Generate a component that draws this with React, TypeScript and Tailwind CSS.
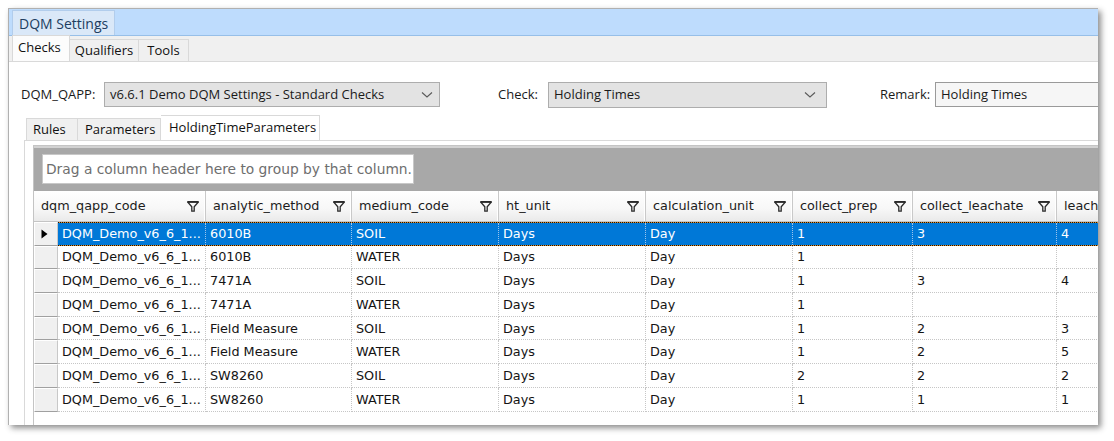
import React from 'react';

const ui = "font-['Open_Sans',sans-serif] text-[13px]";
const grid = "font-['DejaVu_Sans',sans-serif] text-[12.8px]";

const columns = [
  { name: 'analytic_method', w: 'w-[146px]' },
  { name: 'medium_code', w: 'w-[147px]' },
  { name: 'ht_unit', w: 'w-[147px]' },
  { name: 'calculation_unit', w: 'w-[147px]' },
  { name: 'collect_prep', w: 'w-[120px]' },
  { name: 'collect_leachate', w: 'w-[144px]' },
  { name: 'leachate_prep', w: 'w-[140px]' },
];

const rows: string[][] = [
  ['6010B', 'SOIL', 'Days', 'Day', '1', '3', '4'],
  ['6010B', 'WATER', 'Days', 'Day', '1', '', ''],
  ['7471A', 'SOIL', 'Days', 'Day', '1', '3', '4'],
  ['7471A', 'WATER', 'Days', 'Day', '1', '', ''],
  ['Field Measure', 'SOIL', 'Days', 'Day', '1', '2', '3'],
  ['Field Measure', 'WATER', 'Days', 'Day', '1', '2', '5'],
  ['SW8260', 'SOIL', 'Days', 'Day', '2', '2', '2'],
  ['SW8260', 'WATER', 'Days', 'Day', '1', '1', '1'],
];

function Funnel() {
  return (
    <svg width="12" height="11" viewBox="0 0 12 11" className="shrink-0">
      <path d="M0.8 1.2 H11.2 L7.2 5.8 V10.2 H4.8 V5.8 Z" fill="none" stroke="#2a2a2a" strokeWidth="1.3" strokeLinejoin="miter" />
      <path d="M0.5 0.8 H11.5" stroke="#2a2a2a" strokeWidth="1.6" />
    </svg>
  );
}

function Chevron() {
  return (
    <svg width="12" height="8" viewBox="0 0 12 8">
      <path d="M1 1.5 L6 6 L11 1.5" fill="none" stroke="#5a5a5a" strokeWidth="1.1" />
    </svg>
  );
}

function HeaderCell({ name, w }: { name: string; w: string }) {
  return (
    <div className={`${w} shrink-0 h-full flex items-center justify-between pl-[7px] pr-[6px] border-r border-[#c9c9c9] shadow-[inset_-1px_0_0_#ffffff] overflow-hidden`}>
      <span className="whitespace-nowrap text-[#1c1c1c]">{name}</span>
      <Funnel />
    </div>
  );
}

function FocusLine() {
  return <div className="h-px w-full bg-[repeating-linear-gradient(90deg,#1a1208_0_1px,#e0902a_1px_2px)]" />;
}

export default function App() {
  return (
    <div className={`w-[1114px] h-[441px] bg-white pl-[8px] pt-[8px] ${ui}`}>
      <div className="w-[1090px] h-[417px] border-l border-t border-[#b0b0b0] bg-white flex flex-col overflow-hidden shadow-[3px_3px_6px_rgba(0,0,0,0.45)]">
        {/* document tab strip */}
        <div className="h-[27px] shrink-0 bg-[#bedcfd] border-b border-[#97bfe8] flex items-end pl-[3px]">
          <div className="h-[25px] px-[6px] bg-[#dae8f8] border border-b-0 border-[#b2cdec] text-[#203d60] flex items-center text-[14px]">
            DQM Settings
          </div>
        </div>

        {/* Checks / Qualifiers / Tools */}
        <div className="h-[26px] shrink-0 bg-[#f0f0f0] border-b border-[#d9d9d9] flex items-end pl-[3px]">
          <div className="h-[26px] w-[58px] bg-[#fcfcfc] border border-b-0 border-[#d9d9d9] flex items-start pt-[2px] pl-[5px] text-[#111]">
            Checks
          </div>
          <div className="h-[22px] w-[69px] bg-[#f0f0f0] border border-b-0 border-l-0 border-[#d9d9d9] flex items-center justify-center text-[#111]">
            Qualifiers
          </div>
          <div className="h-[22px] w-[50px] bg-[#f0f0f0] border border-b-0 border-l-0 border-[#d9d9d9] flex items-center justify-center text-[#111]">
            Tools
          </div>
        </div>

        {/* main area */}
        <div className="flex-1 flex flex-col bg-white min-h-0">
          <div className="flex items-center pt-[20px] pl-[12px] h-[45px] shrink-0 text-[#1a1a1a]">
            <span className="w-[83px] shrink-0">DQM_QAPP:</span>
            <div className="w-[336px] h-[25px] shrink-0 bg-[#e3e3e3] border border-[#adadad] flex items-center justify-between pl-[5px] pr-[6px]">
              <span className="whitespace-nowrap">v6.6.1 Demo DQM Settings - Standard Checks</span>
              <Chevron />
            </div>
            <span className="w-[50px] shrink-0 ml-[58px]">Check:</span>
            <div className="w-[279px] h-[26px] shrink-0 bg-[#e3e3e3] border border-[#adadad] flex items-center justify-between pl-[5px] pr-[10px]">
              <span className="whitespace-nowrap">Holding Times</span>
              <Chevron />
            </div>
            <span className="w-[55px] shrink-0 ml-[53px]">Remark:</span>
            <div className="w-[220px] h-[25px] shrink-0 bg-[#f6f6f6] border border-[#9a9a9a] border-r-0 flex items-center pl-[5px]">
              <span className="whitespace-nowrap">Holding Times</span>
            </div>
          </div>

          {/* inner tabs */}
          <div className="mt-[8px] ml-[17px] h-[25px] shrink-0 flex items-end">
            <div className="h-[22px] w-[52px] bg-[#f0f0f0] border border-b-0 border-[#d9d9d9] flex items-center pl-[6px] text-[#111]">Rules</div>
            <div className="h-[22px] w-[83px] bg-[#f0f0f0] border border-b-0 border-l-0 border-[#d9d9d9] flex items-center pl-[7px] text-[#111]">Parameters</div>
            <div className="h-[25px] w-[159px] bg-white border border-b-0 border-l-0 border-[#d9d9d9] flex items-start pt-[2px] pl-[8px] text-[#111] whitespace-nowrap">HoldingTimeParameters</div>
          </div>

          {/* tab panel */}
          <div className="flex-1 ml-[15px] border-l border-t border-[#d9d9d9] bg-white pl-[8px] pt-[4px] min-h-0">
            <div className={`h-full border-l border-t border-[#c4c4c4] flex flex-col ${grid}`}>
              {/* group by panel */}
              <div className="h-[45px] shrink-0 bg-[#a8a8a8] border-t-2 border-[#d2d2d2] pl-[8px] pt-[6px]">
                <div className="w-[372px] h-[30px] bg-white border border-[#c8c8c8] flex items-center pl-[3px] text-[#6e6e6e] text-[13.8px] whitespace-nowrap">
                  Drag a column header here to group by that column.
                </div>
              </div>

              {/* header */}
              <div className="h-[31px] shrink-0 flex bg-[linear-gradient(#ffffff,#f7f7f7_60%,#eaeaea)] border-b border-[#c4c4c4]">
                <HeaderCell name="dqm_qapp_code" w="w-[172px]" />
                {columns.map((c) => (
                  <HeaderCell key={c.name} name={c.name} w={c.w} />
                ))}
              </div>

              {/* rows */}
              {rows.map((r, i) => {
                const sel = i === 0;
                return (
                  <div key={i} className="h-[23.7px] shrink-0 flex">
                    <div className="w-[24px] shrink-0 h-full bg-[#f0f0f0] border-t border-l border-white border-b border-r border-b-[#a0a0a0] border-r-[#c8c8c8] flex items-center pl-[6px]">
                      {sel && (
                        <svg width="7" height="10" viewBox="0 0 7 10">
                          <path d="M0.5 0.5 L6.5 5 L0.5 9.5 Z" fill="#000" />
                        </svg>
                      )}
                    </div>
                    <div className={`flex-1 h-full flex flex-col ${sel ? 'bg-[#0078d7] text-white' : 'text-[#141414]'}`}>
                      {sel && <FocusLine />}
                      <div className="flex flex-1 min-h-0">
                        {['DQM_Demo_v6_6_1...', ...r].map((v, j) => {
                          const w = j === 0 ? 'w-[148px]' : columns[j - 1].w;
                          return (
                            <div
                              key={j}
                              className={`${w} shrink-0 h-full flex items-center pl-[4px] whitespace-nowrap overflow-hidden border-r border-dotted ${sel ? 'border-[#9cc4ec]' : 'border-[#c6c6c6] border-b'}`}
                            >
                              {v}
                            </div>
                          );
                        })}
                      </div>
                      {sel && <FocusLine />}
                    </div>
                  </div>
                );
              })}
            </div>
          </div>
        </div>
      </div>
    </div>
  );
}
